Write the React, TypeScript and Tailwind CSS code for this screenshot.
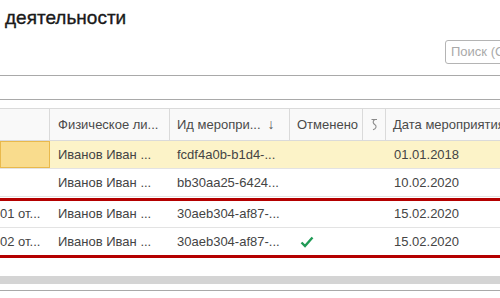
import React from "react";

type Row = {
    num: string;
    person: string;
    id: string;
    cancelled?: boolean;
    date: string;
};

const cols = ["w-[50px]", "w-[120px]", "w-[120px]", "w-[73px]", "w-[23px]"];

function Check() {
    return <svg width="14" height="12" viewBox="0 0 14 12" className="ml-[10px]">
        <path d="M1.5 6.5 L5 10 L12.5 1.5" fill="none" stroke="#1f9a55" strokeWidth="2.4" />
    </svg>;
}

function Attach() {
    return <svg width="9" height="13" viewBox="0 0 9 13">
        <path d="M1.5 1.5 H7 M4.5 1.5 C2.5 3.5 2.8 5.5 5 6.8 C7 8 6.2 10.8 3 11.8" fill="none" stroke="#8a8a8a" strokeWidth="1.1" />
    </svg>;
}

function BodyRow({ row, selected, tall, last }: { row: Row; selected?: boolean; tall?: boolean; last?: boolean }) {
    return <div className={`flex ${tall ? "h-[28px]" : "h-[27px]"} ${last ? "" : "border-b border-[#e3e3e3]"} ${selected ? "bg-[#fcf3c8]" : ""}`}>
        <div className={`${cols[0]} shrink-0 flex items-center overflow-hidden whitespace-nowrap ${selected ? "bg-[#f9dc8d] border border-[#e9b94c]" : ""}`}>
            {row.num}
        </div>
        <div className={`${cols[1]} shrink-0 flex items-center pl-[8px]`}>{row.person}</div>
        <div className={`${cols[2]} shrink-0 flex items-center pl-[7px]`}>{row.id}</div>
        <div className={`${cols[3]} shrink-0 flex items-center`}>{row.cancelled ? <Check /> : null}</div>
        <div className={`${cols[4]} shrink-0`} />
        <div className="flex-1 flex items-center pl-[8px]">{row.date}</div>
    </div>;
}

export default function App() {
    const rows: Row[] = [
        { num: "", person: "Иванов Иван ...", id: "fcdf4a0b-b1d4-...", date: "01.01.2018" },
        { num: "", person: "Иванов Иван ...", id: "bb30aa25-6424...", date: "10.02.2020" },
        { num: "01 от...", person: "Иванов Иван ...", id: "30aeb304-af87-...", date: "15.02.2020" },
        { num: "02 от...", person: "Иванов Иван ...", id: "30aeb304-af87-...", cancelled: true, date: "15.02.2020" },
    ];

    return <div className="w-[500px] h-[298px] overflow-hidden bg-white text-[13px] text-[#444] font-['Liberation_Sans',Arial,sans-serif]">
        <div className="pt-[6px] pl-[5px] text-[19px] leading-[24px] text-[#1a1a1a] [-webkit-text-stroke:0.35px_#1a1a1a]">деятельности</div>

        <div className="flex mt-[10px]">
            <div className="ml-[445px] shrink-0 w-[120px] h-[24px] border border-[#b4b4b4] rounded-[3px] flex items-center pl-[5px] text-[#a9a9a9] whitespace-nowrap">
                Поиск (Ctrl+F)
            </div>
        </div>

        <div className="mt-[11px] border-t border-[#a9a9a9] h-[24px]" />
        <div className="border-t border-[#a9a9a9] h-[9px]" />

        <div className="flex h-[33px] border-y border-[#dadada] bg-[#f9f9f9] text-[#4a4a4a]">
            <div className={`${cols[0]} shrink-0 border-r border-[#dadada]`} />
            <div className={`${cols[1]} shrink-0 border-r border-[#dadada] flex items-center pl-[8px]`}>Физическое ли...</div>
            <div className={`${cols[2]} shrink-0 border-r border-[#dadada] flex items-center pl-[7px]`}>
                <span>Ид меропри...</span>
                <span className="ml-[7px] text-[14px] text-[#555]">↓</span>
            </div>
            <div className={`${cols[3]} shrink-0 border-r border-[#dadada] flex items-center pl-[7px]`}>Отменено</div>
            <div className={`${cols[4]} shrink-0 border-r border-[#dadada] flex items-center justify-center`}><Attach /></div>
            <div className="flex-1 flex items-center pl-[7px] whitespace-nowrap">Дата мероприятия</div>
        </div>

        <BodyRow row={rows[0]} selected tall />
        <BodyRow row={rows[1]} tall />

        <div className="mt-[1px] border-y-[3px] border-[#b40000]">
            <BodyRow row={rows[2]} />
            <BodyRow row={rows[3]} last />
        </div>

        <div className="mt-[18px] h-[8px] bg-[#d4d4d4]" />
        <div className="mt-[6px] border-t border-[#a9a9a9]" />
    </div>;
}
